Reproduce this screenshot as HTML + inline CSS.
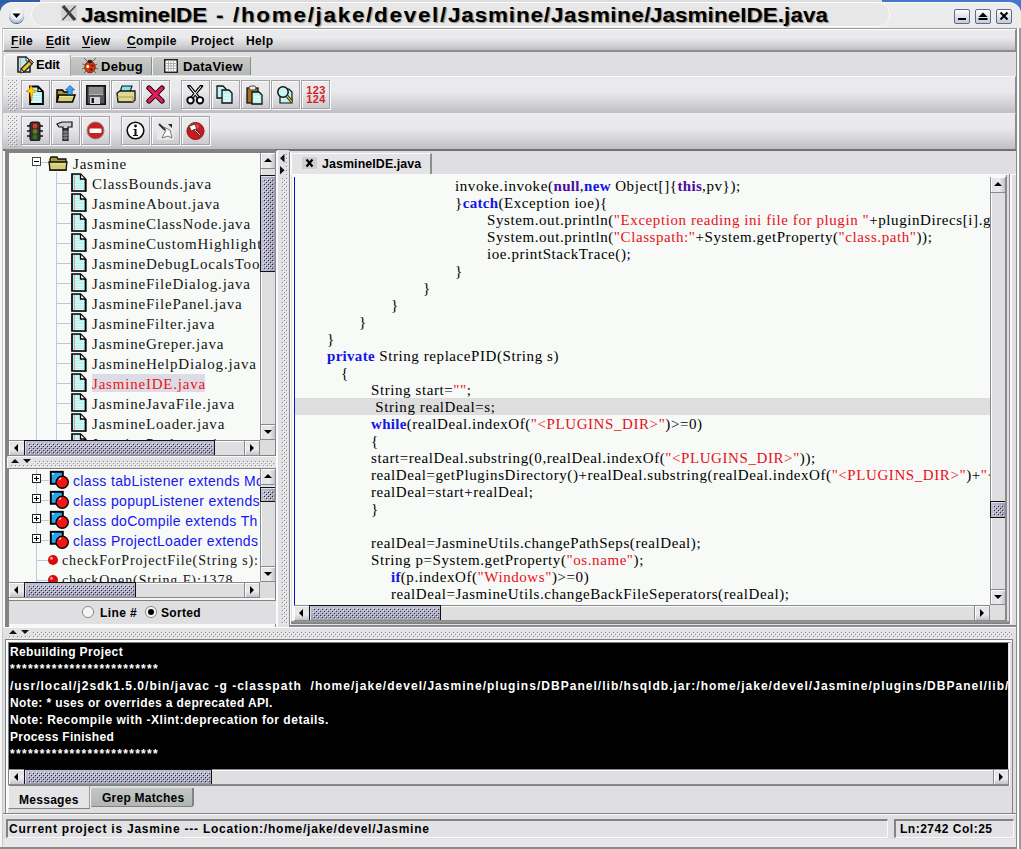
<!DOCTYPE html>
<html><head><meta charset="utf-8"><style>
*{margin:0;padding:0;box-sizing:border-box}
html,body{width:1021px;height:849px;overflow:hidden;background:#dddcdf;font-family:"Liberation Sans",sans-serif}
.a{position:absolute}
.t{white-space:pre}
.grad{background:linear-gradient(#ebeaed,#e9e8eb 40%,#d6d5d9 70%,#bfbec2)}
.btn{position:absolute;width:29px;height:29px;border:1px solid #a4a4a8;box-shadow:inset 1px 1px 0 #fbfbfb,1px 1px 0 #fbfbfb}
.grip{position:absolute;background-image:radial-gradient(circle at 1px 1px,#8e8e92 0.9px,transparent 1.1px),radial-gradient(circle at 3px 3px,#8e8e92 0.9px,transparent 1.1px);background-size:4px 4px}
.code{position:absolute;font-family:"Liberation Serif",serif;font-size:15px;letter-spacing:0.58px;white-space:pre;color:#000;line-height:17px}
.k{color:#1414e6;font-weight:bold;letter-spacing:0.3px}
.kp{color:#4a0ca0;font-weight:bold;letter-spacing:0.3px}
.s{color:#e8101a}
.tree{position:absolute;font-family:"Liberation Serif",serif;font-size:15px;letter-spacing:0.8px;white-space:pre;color:#141414;line-height:20px}
.thumbv{background:linear-gradient(90deg,#9896ac,#cac8da 45%,#aeacc0);border-left:1px solid #333;border-top:1px solid #444}
.thumbh{background:linear-gradient(#9896ac,#cac8da 45%,#aeacc0);border-top:1px solid #333;border-left:1px solid #444}
.dots{background-image:radial-gradient(circle,#4c4b60 0.75px,transparent 1.05px);background-size:3px 3px}
.sbtn{background:linear-gradient(90deg,#e6e6e6,#f4f4f4 50%,#cfcfcf);}
.sbtnh{background:linear-gradient(#e6e6e6,#f4f4f4 50%,#cfcfcf);}
.track{background:#dcdcdc}
</style></head><body>
<svg width="0" height="0" style="position:absolute;left:0;top:0"><defs><pattern id="bump" width="4" height="4" patternUnits="userSpaceOnUse"><rect x="0" y="0" width="1" height="1" fill="#8a8a8e"/><rect x="1" y="1" width="1" height="1" fill="#fdfdfd"/><rect x="2" y="2" width="1" height="1" fill="#8a8a8e"/><rect x="3" y="3" width="1" height="1" fill="#fdfdfd"/></pattern><pattern id="tdot" width="4" height="4" patternUnits="userSpaceOnUse"><rect x="0" y="1" width="1" height="1" fill="#2a2a36"/><rect x="3" y="0" width="1" height="1" fill="#e4e4f6"/><rect x="2" y="3" width="1" height="1" fill="#2a2a36"/><rect x="1" y="2" width="1" height="1" fill="#e4e4f6"/></pattern><pattern id="tdoth" width="4" height="4" patternUnits="userSpaceOnUse"><rect x="1" y="0" width="1" height="1" fill="#2a2a36"/><rect x="0" y="3" width="1" height="1" fill="#e4e4f6"/><rect x="3" y="2" width="1" height="1" fill="#2a2a36"/><rect x="2" y="1" width="1" height="1" fill="#e4e4f6"/></pattern><linearGradient id="thv" x1="0" x2="1" y1="0" y2="0"><stop offset="0" stop-color="#c0bed2"/><stop offset="0.45" stop-color="#b4b2c6"/><stop offset="1" stop-color="#9896aa"/></linearGradient><linearGradient id="thh" x1="0" x2="0" y1="0" y2="1"><stop offset="0" stop-color="#c0bed2"/><stop offset="0.45" stop-color="#b4b2c6"/><stop offset="1" stop-color="#9896aa"/></linearGradient><linearGradient id="btv" x1="0" x2="1" y1="0" y2="0"><stop offset="0" stop-color="#e2e2e4"/><stop offset="0.55" stop-color="#ecebee"/><stop offset="1" stop-color="#c4c3c8"/></linearGradient><linearGradient id="bth" x1="0" x2="0" y1="0" y2="1"><stop offset="0" stop-color="#e2e2e4"/><stop offset="0.55" stop-color="#ecebee"/><stop offset="1" stop-color="#c4c3c8"/></linearGradient></defs></svg>
<div class="a" style="left:0px;top:0px;width:1021px;height:849px;background:#dddcdf"></div>
<div class="a" style="left:0px;top:0px;width:40px;height:4px;background:#2f5ea8"></div>
<div class="a" style="left:0px;top:0px;width:9px;height:11px;background:#2f5ea8"></div>
<div class="a" style="left:882px;top:0px;width:139px;height:4px;background:#4278cc"></div>
<div class="a" style="left:1008px;top:0px;width:13px;height:12px;background:#4278cc"></div>
<div class="a" style="left:0px;top:2px;width:1021px;height:28px;background:#ececec;border-radius:12px 12px 0 0;border-top:1px solid #fbfbfb"></div>
<div class="a" style="left:31px;top:2px;width:859px;height:25px;background:#e7e7e7;border-radius:12px;border:1.5px solid #fcfcfc"></div>
<div class="a" style="left:9px;top:8px;width:15px;height:15px;border-radius:50%;background:radial-gradient(circle at 50% 35%,#ffffff 0,#eef0f4 45%,#b8c4d8 70%,#4a6ea8 100%);box-shadow:0 1px 0 #3a5a98"></div>
<svg class="a" style="left:9px;top:8px" width="15" height="15" viewBox="0 0 15 15"><path d="M3.5 5.5 L11.5 5.5 L7.5 10 Z" fill="#000"/></svg>
<div class="a" style="left:61px;top:5px;width:16px;height:16px;background:#d4d4d4"></div>
<svg class="a" style="left:61px;top:5px" width="16" height="16" viewBox="0 0 16 16"><path d="M2 1 L14 15" stroke="#3a3a3a" stroke-width="3.2"/><path d="M14.5 1 L1.5 15" stroke="#444" stroke-width="1.3"/></svg>
<div class="a t " style="left:81px;top:4px;font-size:20px;font-weight:bold;color:#000;transform-origin:0 0;text-shadow:1px 1px 1px #8a8a8a;letter-spacing:-0.089px;transform:scaleX(1.12)">JasmineIDE</div>
<div class="a t " style="left:216px;top:4px;font-size:20px;font-weight:bold;color:#000;transform-origin:0 0;text-shadow:1px 1px 1px #8a8a8a;letter-spacing:1.366px;transform:scaleX(1.12)">-</div>
<div class="a t " style="left:233px;top:4px;font-size:20px;font-weight:bold;color:#000;transform-origin:0 0;text-shadow:1px 1px 1px #8a8a8a;letter-spacing:1.548px;transform:scaleX(1.12)">/home/jake/devel/</div>
<div class="a t " style="left:448px;top:4px;font-size:20px;font-weight:bold;color:#000;transform-origin:0 0;text-shadow:1px 1px 1px #8a8a8a;letter-spacing:0.793px;transform:scaleX(1.12)">Jasmine/</div>
<div class="a t " style="left:551px;top:4px;font-size:20px;font-weight:bold;color:#000;transform-origin:0 0;text-shadow:1px 1px 1px #8a8a8a;letter-spacing:0.458px;transform:scaleX(1.12)">Jasmine/</div>
<div class="a t " style="left:650px;top:4px;font-size:20px;font-weight:bold;color:#000;transform-origin:0 0;text-shadow:1px 1px 1px #8a8a8a;letter-spacing:0.07px;transform:scaleX(1.12)">JasmineIDE.java</div>
<div class="a" style="left:954px;top:9px;width:16px;height:15px;border:1px solid #5f6b88;background:linear-gradient(#ffffff,#c5cad8);border-radius:2px"></div>
<div class="a" style="left:975px;top:9px;width:16px;height:15px;border:1px solid #5f6b88;background:linear-gradient(#ffffff,#c5cad8);border-radius:2px"></div>
<div class="a" style="left:996px;top:9px;width:16px;height:15px;border:1px solid #5f6b88;background:linear-gradient(#ffffff,#c5cad8);border-radius:2px"></div>
<svg class="a" style="left:954px;top:9px" width="16" height="15" viewBox="0 0 16 15"><rect x="4" y="9" width="8" height="2" fill="#000"/></svg>
<svg class="a" style="left:975px;top:9px" width="16" height="15" viewBox="0 0 16 15"><path d="M3.5 8 L8 3.5 L12.5 8 Z" fill="#000"/><rect x="3.5" y="9" width="9" height="2" fill="#000"/></svg>
<svg class="a" style="left:996px;top:9px" width="16" height="15" viewBox="0 0 16 15"><path d="M4.5 3.5 L11.5 10.5 M11.5 3.5 L4.5 10.5" stroke="#000" stroke-width="2"/></svg>
<div class="a" style="left:0px;top:28px;width:5px;height:821px;background:#fbfbfb;border-left:2px solid #f4f7f4"></div>
<div class="a" style="left:2px;top:28px;width:1px;height:821px;background:#c8c8c8"></div>
<div class="a" style="left:3px;top:28px;width:1013px;height:1px;background:#9a9a9a"></div>
<div class="a grad" style="left:3px;top:29px;width:1014px;height:23px;border-top:1px solid #fff;border-left:1px solid #fff;border-bottom:2px solid #8d8d91;border-right:2px solid #8d8d91"></div>
<div class="a t " style="left:11px;top:34px;font-size:12px;font-weight:bold;color:#000;letter-spacing:0.35px;line-height:15px;text-underline-offset:2px"><u>F</u>ile</div>
<div class="a t " style="left:46px;top:34px;font-size:12px;font-weight:bold;color:#000;letter-spacing:0.35px;line-height:15px;text-underline-offset:2px"><u>E</u>dit</div>
<div class="a t " style="left:82px;top:34px;font-size:12px;font-weight:bold;color:#000;letter-spacing:0.35px;line-height:15px;text-underline-offset:2px"><u>V</u>iew</div>
<div class="a t " style="left:127px;top:34px;font-size:12px;font-weight:bold;color:#000;letter-spacing:0.35px;line-height:15px;text-underline-offset:2px"><u>C</u>ompile</div>
<div class="a t " style="left:191px;top:34px;font-size:12px;font-weight:bold;color:#000;letter-spacing:0.35px;line-height:15px;text-underline-offset:2px">Project</div>
<div class="a t " style="left:246px;top:34px;font-size:12px;font-weight:bold;color:#000;letter-spacing:0.35px;line-height:15px;text-underline-offset:2px">Help</div>
<div class="a" style="left:3px;top:52px;width:1013px;height:25px;background:#dfdee1"></div>
<div class="a" style="left:70px;top:56px;width:82px;height:19px;background:linear-gradient(#c8cac8,#b4b8b4);border-left:1px solid #f2f2f2;border-top:1px solid #f2f2f2;border-right:1px solid #8a8a8a;border-radius:3px 3px 0 0"></div>
<div class="a" style="left:152px;top:56px;width:99px;height:19px;background:linear-gradient(#c8cac8,#b4b8b4);border-left:1px solid #f2f2f2;border-top:1px solid #f2f2f2;border-right:1px solid #8a8a8a;border-radius:3px 3px 0 0"></div>
<div class="a" style="left:4px;top:54px;width:67px;height:23px;background:linear-gradient(#efeff0,#dfdee1);border-left:1px solid #fff;border-top:1px solid #fff;border-right:1px solid #a8a8a8;border-radius:4px 4px 0 0"></div>
<div class="a t " style="left:36px;top:57px;font-size:13px;font-weight:bold;color:#000;letter-spacing:-0.2px">Edit</div>
<div class="a t " style="left:101px;top:59px;font-size:13px;font-weight:bold;color:#000;letter-spacing:0.3px">Debug</div>
<div class="a t " style="left:183px;top:59px;font-size:13px;font-weight:bold;color:#000;letter-spacing:0.3px">DataView</div>
<svg class="a" style="left:16px;top:55px" width="18" height="19" viewBox="0 0 18 19"><path d="M2 2 H10 L14 6 V17 H2 Z" fill="#b4eeee" stroke="#222" stroke-width="1.6"/><path d="M4.5 3 V16" stroke="#f0a0a0" stroke-width="1.2"/><path d="M10 2 L14 6 H10 Z" fill="#fff" stroke="#222" stroke-width="0.9"/><path d="M5 14 L13 6 L16 9 L8 17 Z" fill="#f2cc2a" stroke="#222" stroke-width="1.3"/><path d="M13 6 L14.5 4.5 L17.5 7.5 L16 9 Z" fill="#e86a6a" stroke="#222" stroke-width="0.9"/><path d="M5 14 L8 17 L4 18 Z" fill="#d4b080" stroke="#222" stroke-width="0.8"/></svg>
<svg class="a" style="left:81px;top:56px" width="18" height="18" viewBox="0 0 18 18"><path d="M3 2 L6 5 M15 2 L12 5 M1.5 8 L4 9 M16.5 8 L14 9 M1 13 L4 12 M17 13 L14 12 M3 17 L5 15 M15 17 L13 15" stroke="#6a5a3a" stroke-width="0.9"/><ellipse cx="9" cy="11" rx="5.2" ry="5.8" fill="#e23a0c" stroke="#5a1a0a" stroke-width="0.8"/><ellipse cx="9" cy="5.5" rx="2.6" ry="1.8" fill="#222"/><circle cx="6.8" cy="10.5" r="1.5" fill="#fff"/><circle cx="11.5" cy="9.5" r="1" fill="#3a0a00"/><circle cx="10.5" cy="13.5" r="1.1" fill="#3a0a00"/><path d="M9 7 V16.5" stroke="#8a1a00" stroke-width="0.6"/></svg>
<svg class="a" style="left:164px;top:59px" width="14" height="14" viewBox="0 0 14 14"><rect x="0.75" y="0.75" width="12.5" height="12.5" fill="#fff" stroke="#222" stroke-width="1.5"/><path d="M4.5 1 V13 M7 1 V13 M9.5 1 V13 M1 4.5 H13 M1 7 H13 M1 9.5 H13" stroke="#aaa" stroke-width="0.9"/></svg>
<div class="a grad" style="left:3px;top:76px;width:1013px;height:37px;border-top:1px solid #fafafc;border-right:1px solid #8d8d91"></div>
<div class="a grad" style="left:3px;top:113px;width:1013px;height:36px;border-top:1px solid #f0f0f2;border-right:1px solid #8d8d91"></div>
<div class="a" style="left:3px;top:149px;width:1013px;height:2px;background:#727274"></div>
<svg class="a" style="left:8px;top:80px" width="9" height="31" viewBox="0 0 9 31"><rect width="9" height="31" fill="url(#bump)"/></svg>
<svg class="a" style="left:8px;top:116px" width="9" height="31" viewBox="0 0 9 31"><rect width="9" height="31" fill="url(#bump)"/></svg>
<div class="btn" style="left:21px;top:80px"></div>
<div class="btn" style="left:51px;top:80px"></div>
<div class="btn" style="left:81px;top:80px"></div>
<div class="btn" style="left:111px;top:80px"></div>
<div class="btn" style="left:141px;top:80px"></div>
<div class="btn" style="left:181px;top:80px"></div>
<div class="btn" style="left:211px;top:80px"></div>
<div class="btn" style="left:241px;top:80px"></div>
<div class="btn" style="left:271px;top:80px"></div>
<div class="btn" style="left:301px;top:80px"></div>
<div class="btn" style="left:21px;top:116px"></div>
<div class="btn" style="left:51px;top:116px"></div>
<div class="btn" style="left:81px;top:116px"></div>
<div class="btn" style="left:121px;top:116px"></div>
<div class="btn" style="left:151px;top:116px"></div>
<div class="btn" style="left:181px;top:116px"></div>
<svg class="a" style="left:26px;top:85px" width="20" height="20" viewBox="0 0 20 20"><path d="M4 1.5 H12 L17 6.5 V19 H4 Z" fill="#aef2f2" stroke="#000" stroke-width="1.8"/><path d="M6 9 H15 M6 11.5 H15 M6 14 H15 M6 16.5 H15" stroke="#f0ffff" stroke-width="1"/><path d="M12 2 V6.5 H16.5 Z" fill="#fff" stroke="#000" stroke-width="1.2"/><path d="M5 0 L6.6 4.6 L10.5 6.2 L6.6 7.8 L5.6 16 L4.4 7.8 L0 6.2 L3.4 4.6 Z" fill="#ffd800" stroke="#f08a00" stroke-width="0.9"/></svg>
<svg class="a" style="left:56px;top:85px" width="20" height="20" viewBox="0 0 20 20"><path d="M1 5 H6.5 L8 7 H14 V16 H1 Z" fill="#a89838" stroke="#000" stroke-width="1.5"/><path d="M0.8 17 L2.8 10 H19 L16.5 17 Z" fill="#d8cc70" stroke="#000" stroke-width="1.5"/><path d="M3 11.5 H17" stroke="#f0e8a8" stroke-width="1"/><path d="M14 0.5 L18.5 5 H16.2 V9.5 H11.8 V5 H9.5 Z" fill="#38a4f0" stroke="#10508a" stroke-width="0.7"/></svg>
<svg class="a" style="left:86px;top:85px" width="20" height="20" viewBox="0 0 20 20"><rect x="0.8" y="0.8" width="18.4" height="18.4" fill="#585858" stroke="#111" stroke-width="1.6"/><rect x="3" y="2" width="14" height="7" fill="#8e8e8e"/><rect x="3" y="9" width="14" height="1" fill="#b0b0b0"/><rect x="4" y="12" width="10" height="7" fill="#dadada"/><rect x="5.5" y="13" width="2.5" height="5" fill="#1a1a1a"/></svg>
<svg class="a" style="left:116px;top:85px" width="20" height="20" viewBox="0 0 20 20"><path d="M6 1 H16 L14 7 H4 Z" fill="#7fe6ec" stroke="#111" stroke-width="1.1"/><path d="M1 8 L4 6 H19 V15 L17 17 H2 Z" fill="#e0d890" stroke="#111" stroke-width="1.3"/><path d="M1 12 H17 V17" fill="none" stroke="#a89c40" stroke-width="1"/></svg>
<svg class="a" style="left:146px;top:85px" width="20" height="20" viewBox="0 0 20 20"><path d="M3 3 L16 16 M16 3 L3 16" stroke="#000" stroke-width="5.2" stroke-linecap="round"/><path d="M3 3 L16 16 M16 3 L3 16" stroke="#e41c5a" stroke-width="3.2" stroke-linecap="round"/></svg>
<svg class="a" style="left:186px;top:85px" width="20" height="20" viewBox="0 0 20 20"><path d="M3 1 L12.5 12.5 M15.5 1 L6 12.5" stroke="#000" stroke-width="3.4" stroke-linecap="round"/><path d="M3.5 1.5 L12 12 M15 1.5 L6.5 12" stroke="#fff" stroke-width="1.1"/><circle cx="4.5" cy="15.3" r="3.2" fill="#fff" stroke="#000" stroke-width="1.9"/><circle cx="14" cy="15.3" r="3.2" fill="#fff" stroke="#000" stroke-width="1.9"/></svg>
<svg class="a" style="left:216px;top:85px" width="20" height="20" viewBox="0 0 20 20"><path d="M1 1 H7 L10 4 V13 H1 Z" fill="#bff3f3" stroke="#111" stroke-width="1.3"/><path d="M6 5 H13 L16 8 V18 H6 Z" fill="#bff3f3" stroke="#111" stroke-width="1.3"/><path d="M8 10 H14 M8 13 H14 M8 16 H14" stroke="#fff" stroke-width="1"/></svg>
<svg class="a" style="left:246px;top:85px" width="20" height="20" viewBox="0 0 20 20"><rect x="1" y="3" width="11" height="15" fill="#a8701c" stroke="#111" stroke-width="1.3"/><rect x="3" y="1" width="7" height="4" rx="2" fill="#eee" stroke="#444"/><path d="M6 7 H13 L16 10 V19 H6 Z" fill="#bff3f3" stroke="#111" stroke-width="1.3"/><path d="M8 12 H14 M8 15 H14" stroke="#fff" stroke-width="1"/></svg>
<svg class="a" style="left:276px;top:85px" width="20" height="20" viewBox="0 0 20 20"><path d="M4 4 H13 L16 7 V18 H4 Z" fill="#bff3f3" stroke="#111" stroke-width="1.2"/><circle cx="7" cy="7" r="5.2" fill="#c8f6f6" stroke="#111" stroke-width="1.5"/><path d="M11 11 L16 17" stroke="#111" stroke-width="3"/><path d="M11 11 L16 17" stroke="#d8b020" stroke-width="1.6"/></svg>
<svg class="a" style="left:306px;top:85px" width="20" height="20" viewBox="0 0 20 20"><text x="10" y="9.2" font-family="Liberation Sans" font-weight="bold" font-size="11" letter-spacing="0.3" fill="#d41e1e" text-anchor="middle">123</text><text x="10" y="18.4" font-family="Liberation Sans" font-weight="bold" font-size="11" letter-spacing="0.3" fill="#d41e1e" text-anchor="middle">124</text></svg>
<svg class="a" style="left:26px;top:121px" width="20" height="20" viewBox="0 0 20 20"><rect x="4" y="1" width="10" height="19" rx="2" fill="#333" stroke="#111"/><path d="M1 5 H4 M1 10 H4 M1 15 H4 M14 5 H17 M14 10 H17 M14 15 H17" stroke="#111" stroke-width="1.5"/><circle cx="9" cy="5" r="2.4" fill="#e83030"/><circle cx="9" cy="10.5" r="2.4" fill="#7a7020"/><circle cx="9" cy="16" r="2.4" fill="#207a20"/></svg>
<svg class="a" style="left:56px;top:121px" width="20" height="20" viewBox="0 0 20 20"><path d="M1 3 L6 1 H16 V6 H12 V8 H7 V6 H3 Z" fill="#d0d0d0" stroke="#111" stroke-width="1.2"/><rect x="7" y="8" width="5" height="12" fill="#555" stroke="#111" stroke-width="1.1"/><path d="M7 11 H12 M7 14 H12 M7 17 H12" stroke="#bbb" stroke-width="0.8"/></svg>
<svg class="a" style="left:86px;top:121px" width="20" height="20" viewBox="0 0 20 20"><circle cx="9.5" cy="9.5" r="8.5" fill="#c82020" stroke="#888" stroke-width="1"/><rect x="3.5" y="7.5" width="12" height="4.5" rx="1" fill="#fff"/></svg>
<svg class="a" style="left:126px;top:121px" width="20" height="20" viewBox="0 0 20 20"><circle cx="9.5" cy="9.5" r="8.3" fill="#fff" stroke="#111" stroke-width="1.6"/><circle cx="9.5" cy="5" r="1.4" fill="#111"/><path d="M7.5 8 H10.5 V14 H12 V15 H7 V14 H8.5 V9 H7.5 Z" fill="#111"/></svg>
<svg class="a" style="left:156px;top:121px" width="20" height="20" viewBox="0 0 20 20"><rect x="1" y="1" width="17" height="18" fill="#e8e8e8"/><path d="M3 4 L10 9 L6 17 L12 15 L16 17 L14 9 Z" fill="#fff" stroke="#777" stroke-width="1"/><path d="M3 3 L9 9" stroke="#333" stroke-width="2"/><path d="M12 3 L16 3 L16 7 Z" fill="#222"/></svg>
<svg class="a" style="left:186px;top:121px" width="20" height="20" viewBox="0 0 20 20"><circle cx="9.5" cy="10" r="8.6" fill="#d01818" stroke="#611" stroke-width="0.8"/><ellipse cx="8" cy="5.5" rx="5" ry="2.5" fill="#f07070" opacity="0.6"/><rect x="4" y="4" width="6" height="5" fill="#fff" stroke="#333" stroke-width="0.8" transform="rotate(-20 7 6.5)"/><path d="M9 9 L14 14" stroke="#333" stroke-width="2.4"/><path d="M9 9 L14 14" stroke="#ddd" stroke-width="1"/></svg>
<div class="a" style="left:5px;top:149px;width:271px;height:479px;background:#828282"></div>
<div class="a" style="left:9px;top:153px;width:251px;height:287px;background:#f7faf7"></div>
<div class="a" style="left:36px;top:166px;width:1px;height:274px;background:#c4c4e4"></div>
<div class="a" style="left:56px;top:172px;width:1px;height:268px;background:#c4c4e4"></div>
<div class="a" style="left:32px;top:157px;width:9px;height:9px;background:#fff;border:1px solid #444"></div>
<div class="a" style="left:34px;top:161px;width:5px;height:1px;background:#000"></div>
<div class="a" style="left:41px;top:162px;width:8px;height:1px;background:#c4c4e4"></div>
<svg class="a" style="left:48px;top:155px" width="21" height="17" viewBox="0 0 21 17"><path d="M2 4 L3 2 H9 L10 4 H18 V15 H2 Z" fill="#a89a3a" stroke="#111" stroke-width="1.3"/><path d="M2 15 L1 7 H19 L18 15 Z" fill="#d8cc72" stroke="#111" stroke-width="1.3"/><path d="M3 9 H17" stroke="#efe6a0" stroke-width="1"/></svg>
<div class="a t tree" style="left:73px;top:154px;color:#141414">Jasmine</div>
<div class="a" style="left:57px;top:183px;width:14px;height:1px;background:#c4c4e4"></div>
<svg class="a" style="left:71px;top:173px" width="16" height="19" viewBox="0 0 16 19"><path d="M15.5 6 V19 H2.5" stroke="#8a8a8a" stroke-width="1.2" fill="none"/><path d="M1 1 H9.5 L14.5 6 V18 H1 Z" fill="#aef2f2" stroke="#000" stroke-width="1.7"/><path d="M3 4 H9 M3 6.5 H13 M3 9 H13 M3 11.5 H13 M3 14 H13 M3 16.5 H13" stroke="#eefcfc" stroke-width="0.9"/><path d="M3.5 2 V17" stroke="#f4a0a0" stroke-width="1"/><path d="M9.5 1.5 V6 H14" fill="#fff" stroke="#000" stroke-width="1.3"/></svg>
<div class="a t tree" style="left:92px;top:174px;color:#141414">ClassBounds.java</div>
<div class="a" style="left:57px;top:203px;width:14px;height:1px;background:#c4c4e4"></div>
<svg class="a" style="left:71px;top:193px" width="16" height="19" viewBox="0 0 16 19"><path d="M15.5 6 V19 H2.5" stroke="#8a8a8a" stroke-width="1.2" fill="none"/><path d="M1 1 H9.5 L14.5 6 V18 H1 Z" fill="#aef2f2" stroke="#000" stroke-width="1.7"/><path d="M3 4 H9 M3 6.5 H13 M3 9 H13 M3 11.5 H13 M3 14 H13 M3 16.5 H13" stroke="#eefcfc" stroke-width="0.9"/><path d="M3.5 2 V17" stroke="#f4a0a0" stroke-width="1"/><path d="M9.5 1.5 V6 H14" fill="#fff" stroke="#000" stroke-width="1.3"/></svg>
<div class="a t tree" style="left:92px;top:194px;color:#141414">JasmineAbout.java</div>
<div class="a" style="left:57px;top:223px;width:14px;height:1px;background:#c4c4e4"></div>
<svg class="a" style="left:71px;top:213px" width="16" height="19" viewBox="0 0 16 19"><path d="M15.5 6 V19 H2.5" stroke="#8a8a8a" stroke-width="1.2" fill="none"/><path d="M1 1 H9.5 L14.5 6 V18 H1 Z" fill="#aef2f2" stroke="#000" stroke-width="1.7"/><path d="M3 4 H9 M3 6.5 H13 M3 9 H13 M3 11.5 H13 M3 14 H13 M3 16.5 H13" stroke="#eefcfc" stroke-width="0.9"/><path d="M3.5 2 V17" stroke="#f4a0a0" stroke-width="1"/><path d="M9.5 1.5 V6 H14" fill="#fff" stroke="#000" stroke-width="1.3"/></svg>
<div class="a t tree" style="left:92px;top:214px;color:#141414">JasmineClassNode.java</div>
<div class="a" style="left:57px;top:243px;width:14px;height:1px;background:#c4c4e4"></div>
<svg class="a" style="left:71px;top:233px" width="16" height="19" viewBox="0 0 16 19"><path d="M15.5 6 V19 H2.5" stroke="#8a8a8a" stroke-width="1.2" fill="none"/><path d="M1 1 H9.5 L14.5 6 V18 H1 Z" fill="#aef2f2" stroke="#000" stroke-width="1.7"/><path d="M3 4 H9 M3 6.5 H13 M3 9 H13 M3 11.5 H13 M3 14 H13 M3 16.5 H13" stroke="#eefcfc" stroke-width="0.9"/><path d="M3.5 2 V17" stroke="#f4a0a0" stroke-width="1"/><path d="M9.5 1.5 V6 H14" fill="#fff" stroke="#000" stroke-width="1.3"/></svg>
<div class="a t tree" style="left:92px;top:234px;color:#141414">JasmineCustomHighlight</div>
<div class="a" style="left:57px;top:263px;width:14px;height:1px;background:#c4c4e4"></div>
<svg class="a" style="left:71px;top:253px" width="16" height="19" viewBox="0 0 16 19"><path d="M15.5 6 V19 H2.5" stroke="#8a8a8a" stroke-width="1.2" fill="none"/><path d="M1 1 H9.5 L14.5 6 V18 H1 Z" fill="#aef2f2" stroke="#000" stroke-width="1.7"/><path d="M3 4 H9 M3 6.5 H13 M3 9 H13 M3 11.5 H13 M3 14 H13 M3 16.5 H13" stroke="#eefcfc" stroke-width="0.9"/><path d="M3.5 2 V17" stroke="#f4a0a0" stroke-width="1"/><path d="M9.5 1.5 V6 H14" fill="#fff" stroke="#000" stroke-width="1.3"/></svg>
<div class="a t tree" style="left:92px;top:254px;color:#141414">JasmineDebugLocalsTool</div>
<div class="a" style="left:57px;top:283px;width:14px;height:1px;background:#c4c4e4"></div>
<svg class="a" style="left:71px;top:273px" width="16" height="19" viewBox="0 0 16 19"><path d="M15.5 6 V19 H2.5" stroke="#8a8a8a" stroke-width="1.2" fill="none"/><path d="M1 1 H9.5 L14.5 6 V18 H1 Z" fill="#aef2f2" stroke="#000" stroke-width="1.7"/><path d="M3 4 H9 M3 6.5 H13 M3 9 H13 M3 11.5 H13 M3 14 H13 M3 16.5 H13" stroke="#eefcfc" stroke-width="0.9"/><path d="M3.5 2 V17" stroke="#f4a0a0" stroke-width="1"/><path d="M9.5 1.5 V6 H14" fill="#fff" stroke="#000" stroke-width="1.3"/></svg>
<div class="a t tree" style="left:92px;top:274px;color:#141414">JasmineFileDialog.java</div>
<div class="a" style="left:57px;top:303px;width:14px;height:1px;background:#c4c4e4"></div>
<svg class="a" style="left:71px;top:293px" width="16" height="19" viewBox="0 0 16 19"><path d="M15.5 6 V19 H2.5" stroke="#8a8a8a" stroke-width="1.2" fill="none"/><path d="M1 1 H9.5 L14.5 6 V18 H1 Z" fill="#aef2f2" stroke="#000" stroke-width="1.7"/><path d="M3 4 H9 M3 6.5 H13 M3 9 H13 M3 11.5 H13 M3 14 H13 M3 16.5 H13" stroke="#eefcfc" stroke-width="0.9"/><path d="M3.5 2 V17" stroke="#f4a0a0" stroke-width="1"/><path d="M9.5 1.5 V6 H14" fill="#fff" stroke="#000" stroke-width="1.3"/></svg>
<div class="a t tree" style="left:92px;top:294px;color:#141414">JasmineFilePanel.java</div>
<div class="a" style="left:57px;top:323px;width:14px;height:1px;background:#c4c4e4"></div>
<svg class="a" style="left:71px;top:313px" width="16" height="19" viewBox="0 0 16 19"><path d="M15.5 6 V19 H2.5" stroke="#8a8a8a" stroke-width="1.2" fill="none"/><path d="M1 1 H9.5 L14.5 6 V18 H1 Z" fill="#aef2f2" stroke="#000" stroke-width="1.7"/><path d="M3 4 H9 M3 6.5 H13 M3 9 H13 M3 11.5 H13 M3 14 H13 M3 16.5 H13" stroke="#eefcfc" stroke-width="0.9"/><path d="M3.5 2 V17" stroke="#f4a0a0" stroke-width="1"/><path d="M9.5 1.5 V6 H14" fill="#fff" stroke="#000" stroke-width="1.3"/></svg>
<div class="a t tree" style="left:92px;top:314px;color:#141414">JasmineFilter.java</div>
<div class="a" style="left:57px;top:343px;width:14px;height:1px;background:#c4c4e4"></div>
<svg class="a" style="left:71px;top:333px" width="16" height="19" viewBox="0 0 16 19"><path d="M15.5 6 V19 H2.5" stroke="#8a8a8a" stroke-width="1.2" fill="none"/><path d="M1 1 H9.5 L14.5 6 V18 H1 Z" fill="#aef2f2" stroke="#000" stroke-width="1.7"/><path d="M3 4 H9 M3 6.5 H13 M3 9 H13 M3 11.5 H13 M3 14 H13 M3 16.5 H13" stroke="#eefcfc" stroke-width="0.9"/><path d="M3.5 2 V17" stroke="#f4a0a0" stroke-width="1"/><path d="M9.5 1.5 V6 H14" fill="#fff" stroke="#000" stroke-width="1.3"/></svg>
<div class="a t tree" style="left:92px;top:334px;color:#141414">JasmineGreper.java</div>
<div class="a" style="left:57px;top:363px;width:14px;height:1px;background:#c4c4e4"></div>
<svg class="a" style="left:71px;top:353px" width="16" height="19" viewBox="0 0 16 19"><path d="M15.5 6 V19 H2.5" stroke="#8a8a8a" stroke-width="1.2" fill="none"/><path d="M1 1 H9.5 L14.5 6 V18 H1 Z" fill="#aef2f2" stroke="#000" stroke-width="1.7"/><path d="M3 4 H9 M3 6.5 H13 M3 9 H13 M3 11.5 H13 M3 14 H13 M3 16.5 H13" stroke="#eefcfc" stroke-width="0.9"/><path d="M3.5 2 V17" stroke="#f4a0a0" stroke-width="1"/><path d="M9.5 1.5 V6 H14" fill="#fff" stroke="#000" stroke-width="1.3"/></svg>
<div class="a t tree" style="left:92px;top:354px;color:#141414">JasmineHelpDialog.java</div>
<div class="a" style="left:57px;top:383px;width:14px;height:1px;background:#c4c4e4"></div>
<svg class="a" style="left:71px;top:373px" width="16" height="19" viewBox="0 0 16 19"><path d="M15.5 6 V19 H2.5" stroke="#8a8a8a" stroke-width="1.2" fill="none"/><path d="M1 1 H9.5 L14.5 6 V18 H1 Z" fill="#aef2f2" stroke="#000" stroke-width="1.7"/><path d="M3 4 H9 M3 6.5 H13 M3 9 H13 M3 11.5 H13 M3 14 H13 M3 16.5 H13" stroke="#eefcfc" stroke-width="0.9"/><path d="M3.5 2 V17" stroke="#f4a0a0" stroke-width="1"/><path d="M9.5 1.5 V6 H14" fill="#fff" stroke="#000" stroke-width="1.3"/></svg>
<div class="a" style="left:92px;top:374px;width:113px;height:18px;background:#dcdce6"></div>
<div class="a t tree" style="left:92px;top:374px;color:#f01414">JasmineIDE.java</div>
<div class="a" style="left:57px;top:403px;width:14px;height:1px;background:#c4c4e4"></div>
<svg class="a" style="left:71px;top:393px" width="16" height="19" viewBox="0 0 16 19"><path d="M15.5 6 V19 H2.5" stroke="#8a8a8a" stroke-width="1.2" fill="none"/><path d="M1 1 H9.5 L14.5 6 V18 H1 Z" fill="#aef2f2" stroke="#000" stroke-width="1.7"/><path d="M3 4 H9 M3 6.5 H13 M3 9 H13 M3 11.5 H13 M3 14 H13 M3 16.5 H13" stroke="#eefcfc" stroke-width="0.9"/><path d="M3.5 2 V17" stroke="#f4a0a0" stroke-width="1"/><path d="M9.5 1.5 V6 H14" fill="#fff" stroke="#000" stroke-width="1.3"/></svg>
<div class="a t tree" style="left:92px;top:394px;color:#141414">JasmineJavaFile.java</div>
<div class="a" style="left:57px;top:423px;width:14px;height:1px;background:#c4c4e4"></div>
<svg class="a" style="left:71px;top:413px" width="16" height="19" viewBox="0 0 16 19"><path d="M15.5 6 V19 H2.5" stroke="#8a8a8a" stroke-width="1.2" fill="none"/><path d="M1 1 H9.5 L14.5 6 V18 H1 Z" fill="#aef2f2" stroke="#000" stroke-width="1.7"/><path d="M3 4 H9 M3 6.5 H13 M3 9 H13 M3 11.5 H13 M3 14 H13 M3 16.5 H13" stroke="#eefcfc" stroke-width="0.9"/><path d="M3.5 2 V17" stroke="#f4a0a0" stroke-width="1"/><path d="M9.5 1.5 V6 H14" fill="#fff" stroke="#000" stroke-width="1.3"/></svg>
<div class="a t tree" style="left:92px;top:414px;color:#141414">JasmineLoader.java</div>
<div class="a" style="left:57px;top:443px;width:14px;height:1px;background:#c4c4e4"></div>
<svg class="a" style="left:71px;top:433px" width="16" height="19" viewBox="0 0 16 19"><path d="M15.5 6 V19 H2.5" stroke="#8a8a8a" stroke-width="1.2" fill="none"/><path d="M1 1 H9.5 L14.5 6 V18 H1 Z" fill="#aef2f2" stroke="#000" stroke-width="1.7"/><path d="M3 4 H9 M3 6.5 H13 M3 9 H13 M3 11.5 H13 M3 14 H13 M3 16.5 H13" stroke="#eefcfc" stroke-width="0.9"/><path d="M3.5 2 V17" stroke="#f4a0a0" stroke-width="1"/><path d="M9.5 1.5 V6 H14" fill="#fff" stroke="#000" stroke-width="1.3"/></svg>
<div class="a t tree" style="left:92px;top:434px;color:#141414">JasminePackages.java</div>
<div class="a" style="left:9px;top:440px;width:251px;height:15px;background:#dadada"></div>
<svg class="a" style="left:260px;top:153px" width="16" height="287" viewBox="0 0 16 287"><rect width="16" height="287" fill="#dfdfe1"/><rect x="0" y="0" width="1" height="287" fill="#8a8a8e"/><rect x="15" y="0" width="1" height="287" fill="#8a8a8e"/><rect x="1" y="0" width="1" height="287" fill="#fbfbfb"/><rect x="2" y="1" width="13" height="15" fill="url(#btv)"/><rect x="1" y="0" width="14" height="1" fill="#fbfbfb"/><rect x="1" y="15" width="14" height="1" fill="#8a8a8e"/><path d="M4 9 L12 9 L8 5 Z" fill="#000"/><rect x="2" y="271" width="13" height="15" fill="url(#btv)"/><rect x="1" y="271" width="14" height="1" fill="#8a8a8e"/><rect x="2" y="272" width="13" height="1" fill="#fbfbfb"/><rect x="1" y="286" width="15" height="1" fill="#8a8a8e"/><path d="M4 277 L12 277 L8 281 Z" fill="#000"/></svg>
<svg class="a" style="left:260px;top:175px" width="16" height="97" viewBox="0 0 16 97"><rect x="0" y="0" width="16" height="97" fill="url(#thv)"/><rect x="3" y="4" width="11" height="91" fill="url(#tdot)"/><rect x="0" y="96" width="16" height="1" fill="#111"/><rect x="1" y="1" width="14" height="1" fill="#dedcf0"/><rect x="0" y="0" width="1" height="97" fill="#111"/><rect x="0" y="0" width="16" height="1" fill="#111"/><rect x="15" y="0" width="1" height="97" fill="#8a8a8e"/></svg>
<svg class="a" style="left:9px;top:440px" width="251" height="16" viewBox="0 0 251 16"><rect width="251" height="16" fill="#dfdfe1"/><rect x="0" y="0" width="251" height="1" fill="#8a8a8e"/><rect x="0" y="15" width="251" height="1" fill="#8a8a8e"/><rect x="0" y="1" width="251" height="1" fill="#fbfbfb"/><rect x="1" y="2" width="15" height="13" fill="url(#bth)"/><rect x="0" y="1" width="1" height="14" fill="#fbfbfb"/><rect x="15" y="1" width="1" height="14" fill="#8a8a8e"/><path d="M9 4 L9 12 L5 8 Z" fill="#000"/><rect x="236" y="2" width="14" height="13" fill="url(#bth)"/><rect x="235" y="1" width="1" height="14" fill="#8a8a8e"/><rect x="236" y="2" width="1" height="13" fill="#fbfbfb"/><rect x="250" y="1" width="1" height="15" fill="#8a8a8e"/><path d="M241 4 L241 12 L245 8 Z" fill="#000"/></svg>
<svg class="a" style="left:24px;top:440px" width="191" height="16" viewBox="0 0 191 16"><rect x="0" y="0" width="191" height="16" fill="url(#thh)"/><rect x="4" y="3" width="185" height="11" fill="url(#tdoth)"/><rect x="190" y="0" width="1" height="16" fill="#111"/><rect x="1" y="1" width="1" height="14" fill="#dedcf0"/><rect x="0" y="0" width="1" height="16" fill="#111"/><rect x="0" y="0" width="191" height="1" fill="#111"/><rect x="0" y="15" width="191" height="1" fill="#8a8a8e"/></svg>
<div class="a" style="left:260px;top:440px;width:15px;height:15px;background:#dcdcdc"></div>
<div class="a" style="left:7px;top:456px;width:269px;height:12px;background:#e2e2e4;border-top:1px solid #fbfbfb;border-left:1px solid #fbfbfb;border-top-left-radius:2px"></div>
<svg class="a" style="left:35px;top:461px" width="239" height="6" viewBox="0 0 239 6"><rect width="239" height="6" fill="url(#bump)"/></svg>
<svg class="a" style="left:11px;top:465px" width="24" height="2" viewBox="0 0 24 2"><rect width="24" height="2" fill="url(#bump)"/></svg>
<svg class="a" style="left:10px;top:457px" width="24" height="8" viewBox="0 0 24 8"><path d="M1 6 L9 6 L5 2 Z M13 2 L21 2 L17 6 Z" fill="#111"/></svg>
<div class="a" style="left:5px;top:468px;width:271px;height:1px;background:#828282"></div>
<div class="a" style="left:9px;top:469px;width:251px;height:113px;background:#f7faf7"></div>
<div class="a" style="left:36px;top:469px;width:1px;height:113px;background:#c4c4e4"></div>
<div class="a" style="left:32px;top:474px;width:9px;height:9px;background:#fff;border:1px solid #222"></div>
<div class="a" style="left:34px;top:478px;width:5px;height:1px;background:#000"></div>
<div class="a" style="left:36px;top:476px;width:1px;height:5px;background:#000"></div>
<div class="a" style="left:41px;top:480px;width:8px;height:1px;background:#c4c4e4"></div>
<svg class="a" style="left:49px;top:470px" width="20" height="21" viewBox="0 0 20 21"><rect x="1.8" y="1.8" width="12" height="12" fill="#26a6f0" stroke="#000" stroke-width="1.9"/><circle cx="3.8" cy="3.8" r="0.9" fill="#fff"/><circle cx="13.2" cy="12.2" r="6.7" fill="#000"/><circle cx="13.2" cy="12.2" r="5.4" fill="#f01616"/><path d="M10.2 9.6 L12 8" stroke="#fff" stroke-width="1.1"/></svg>
<div class="a t " style="left:73px;top:471px;font-size:14px;letter-spacing:0.35px;color:#1616f2;line-height:20px">class tabListener extends Mo</div>
<div class="a" style="left:32px;top:494px;width:9px;height:9px;background:#fff;border:1px solid #222"></div>
<div class="a" style="left:34px;top:498px;width:5px;height:1px;background:#000"></div>
<div class="a" style="left:36px;top:496px;width:1px;height:5px;background:#000"></div>
<div class="a" style="left:41px;top:500px;width:8px;height:1px;background:#c4c4e4"></div>
<svg class="a" style="left:49px;top:490px" width="20" height="21" viewBox="0 0 20 21"><rect x="1.8" y="1.8" width="12" height="12" fill="#26a6f0" stroke="#000" stroke-width="1.9"/><circle cx="3.8" cy="3.8" r="0.9" fill="#fff"/><circle cx="13.2" cy="12.2" r="6.7" fill="#000"/><circle cx="13.2" cy="12.2" r="5.4" fill="#f01616"/><path d="M10.2 9.6 L12 8" stroke="#fff" stroke-width="1.1"/></svg>
<div class="a t " style="left:73px;top:491px;font-size:14px;letter-spacing:0.35px;color:#1616f2;line-height:20px">class popupListener extends</div>
<div class="a" style="left:32px;top:514px;width:9px;height:9px;background:#fff;border:1px solid #222"></div>
<div class="a" style="left:34px;top:518px;width:5px;height:1px;background:#000"></div>
<div class="a" style="left:36px;top:516px;width:1px;height:5px;background:#000"></div>
<div class="a" style="left:41px;top:520px;width:8px;height:1px;background:#c4c4e4"></div>
<svg class="a" style="left:49px;top:510px" width="20" height="21" viewBox="0 0 20 21"><rect x="1.8" y="1.8" width="12" height="12" fill="#26a6f0" stroke="#000" stroke-width="1.9"/><circle cx="3.8" cy="3.8" r="0.9" fill="#fff"/><circle cx="13.2" cy="12.2" r="6.7" fill="#000"/><circle cx="13.2" cy="12.2" r="5.4" fill="#f01616"/><path d="M10.2 9.6 L12 8" stroke="#fff" stroke-width="1.1"/></svg>
<div class="a t " style="left:73px;top:511px;font-size:14px;letter-spacing:0.35px;color:#1616f2;line-height:20px">class doCompile extends Th</div>
<div class="a" style="left:32px;top:534px;width:9px;height:9px;background:#fff;border:1px solid #222"></div>
<div class="a" style="left:34px;top:538px;width:5px;height:1px;background:#000"></div>
<div class="a" style="left:36px;top:536px;width:1px;height:5px;background:#000"></div>
<div class="a" style="left:41px;top:540px;width:8px;height:1px;background:#c4c4e4"></div>
<svg class="a" style="left:49px;top:530px" width="20" height="21" viewBox="0 0 20 21"><rect x="1.8" y="1.8" width="12" height="12" fill="#26a6f0" stroke="#000" stroke-width="1.9"/><circle cx="3.8" cy="3.8" r="0.9" fill="#fff"/><circle cx="13.2" cy="12.2" r="6.7" fill="#000"/><circle cx="13.2" cy="12.2" r="5.4" fill="#f01616"/><path d="M10.2 9.6 L12 8" stroke="#fff" stroke-width="1.1"/></svg>
<div class="a t " style="left:73px;top:531px;font-size:14px;letter-spacing:0.35px;color:#1616f2;line-height:20px">class ProjectLoader extends </div>
<div class="a" style="left:37px;top:560px;width:12px;height:1px;background:#c4c4e4"></div>
<svg class="a" style="left:47px;top:554px" width="12" height="12" viewBox="0 0 12 12"><circle cx="6" cy="6" r="5" fill="#d80c0c"/><circle cx="4.5" cy="4.2" r="1.5" fill="#ff9090"/></svg>
<div class="a t tree" style="left:62px;top:551px;color:#141414;font-size:14px;letter-spacing:0.9px">checkForProjectFile(String s):1</div>
<div class="a" style="left:37px;top:580px;width:12px;height:1px;background:#c4c4e4"></div>
<svg class="a" style="left:47px;top:574px" width="12" height="12" viewBox="0 0 12 12"><circle cx="6" cy="6" r="5" fill="#d80c0c"/><circle cx="4.5" cy="4.2" r="1.5" fill="#ff9090"/></svg>
<div class="a t tree" style="left:62px;top:571px;color:#141414;font-size:14px;letter-spacing:0.9px">checkOpen(String F):1378</div>
<div class="a" style="left:9px;top:582px;width:251px;height:16px;background:#dadada"></div>
<svg class="a" style="left:260px;top:469px" width="16" height="113" viewBox="0 0 16 113"><rect width="16" height="113" fill="#dfdfe1"/><rect x="0" y="0" width="1" height="113" fill="#8a8a8e"/><rect x="15" y="0" width="1" height="113" fill="#8a8a8e"/><rect x="1" y="0" width="1" height="113" fill="#fbfbfb"/><rect x="2" y="1" width="13" height="15" fill="url(#btv)"/><rect x="1" y="0" width="14" height="1" fill="#fbfbfb"/><rect x="1" y="15" width="14" height="1" fill="#8a8a8e"/><path d="M4 9 L12 9 L8 5 Z" fill="#000"/><rect x="2" y="97" width="13" height="15" fill="url(#btv)"/><rect x="1" y="97" width="14" height="1" fill="#8a8a8e"/><rect x="2" y="98" width="13" height="1" fill="#fbfbfb"/><rect x="1" y="112" width="15" height="1" fill="#8a8a8e"/><path d="M4 103 L12 103 L8 107 Z" fill="#000"/></svg>
<svg class="a" style="left:260px;top:487px" width="16" height="15" viewBox="0 0 16 15"><rect x="0" y="0" width="16" height="15" fill="url(#thv)"/><rect x="3" y="4" width="11" height="9" fill="url(#tdot)"/><rect x="0" y="14" width="16" height="1" fill="#111"/><rect x="1" y="1" width="14" height="1" fill="#dedcf0"/><rect x="0" y="0" width="1" height="15" fill="#111"/><rect x="0" y="0" width="16" height="1" fill="#111"/><rect x="15" y="0" width="1" height="15" fill="#8a8a8e"/></svg>
<svg class="a" style="left:9px;top:582px" width="251" height="16" viewBox="0 0 251 16"><rect width="251" height="16" fill="#dfdfe1"/><rect x="0" y="0" width="251" height="1" fill="#8a8a8e"/><rect x="0" y="15" width="251" height="1" fill="#8a8a8e"/><rect x="0" y="1" width="251" height="1" fill="#fbfbfb"/><rect x="1" y="2" width="15" height="13" fill="url(#bth)"/><rect x="0" y="1" width="1" height="14" fill="#fbfbfb"/><rect x="15" y="1" width="1" height="14" fill="#8a8a8e"/><path d="M9 4 L9 12 L5 8 Z" fill="#000"/><rect x="236" y="2" width="14" height="13" fill="url(#bth)"/><rect x="235" y="1" width="1" height="14" fill="#8a8a8e"/><rect x="236" y="2" width="1" height="13" fill="#fbfbfb"/><rect x="250" y="1" width="1" height="15" fill="#8a8a8e"/><path d="M241 4 L241 12 L245 8 Z" fill="#000"/></svg>
<svg class="a" style="left:24px;top:582px" width="112" height="16" viewBox="0 0 112 16"><rect x="0" y="0" width="112" height="16" fill="url(#thh)"/><rect x="4" y="3" width="106" height="11" fill="url(#tdoth)"/><rect x="111" y="0" width="1" height="16" fill="#111"/><rect x="1" y="1" width="1" height="14" fill="#dedcf0"/><rect x="0" y="0" width="1" height="16" fill="#111"/><rect x="0" y="0" width="112" height="1" fill="#111"/><rect x="0" y="15" width="112" height="1" fill="#8a8a8e"/></svg>
<div class="a" style="left:260px;top:582px;width:15px;height:16px;background:#dcdcdc"></div>
<div class="a" style="left:9px;top:598px;width:266px;height:30px;background:#f6f8f6"></div>
<div class="a" style="left:9px;top:600px;width:267px;height:24px;background:#dfdee1;border-top:1px solid #828282"></div>
<svg class="a" style="left:81px;top:605px" width="14" height="14" viewBox="0 0 14 14"><circle cx="7" cy="7" r="5.6" fill="#f4f4f4" stroke="#8a8a8a" stroke-width="1"/></svg>
<div class="a t " style="left:100px;top:606px;font-size:12px;font-weight:bold;color:#000;letter-spacing:0.4px;line-height:15px">Line #</div>
<svg class="a" style="left:144px;top:605px" width="14" height="14" viewBox="0 0 14 14"><circle cx="7" cy="7" r="5.6" fill="#f4f4f4" stroke="#8a8a8a" stroke-width="1"/><circle cx="7" cy="7" r="3" fill="#000"/></svg>
<div class="a t " style="left:161px;top:606px;font-size:12px;font-weight:bold;color:#000;letter-spacing:0.33px;line-height:15px">Sorted</div>
<div class="a" style="left:276px;top:150px;width:13px;height:477px;background:#e2e2e4;border-left:2px solid #fbfbfb;border-top-left-radius:3px"></div>
<svg class="a" style="left:282px;top:178px" width="6" height="446" viewBox="0 0 6 446"><rect width="6" height="446" fill="url(#bump)"/></svg>
<svg class="a" style="left:276px;top:152px" width="13" height="26" viewBox="0 0 13 26"><path d="M8.5 2 L8.5 10.5 L4 6.25 Z M4 14 L4 22.5 L8.5 18.25 Z" fill="#111"/><rect x="10" y="2" width="1" height="1" fill="#8a8a8e"/><rect x="11" y="3" width="1" height="1" fill="#fdfdfd"/><rect x="10" y="6" width="1" height="1" fill="#8a8a8e"/><rect x="11" y="7" width="1" height="1" fill="#fdfdfd"/><rect x="10" y="10" width="1" height="1" fill="#8a8a8e"/><rect x="11" y="11" width="1" height="1" fill="#fdfdfd"/><rect x="10" y="14" width="1" height="1" fill="#8a8a8e"/><rect x="11" y="15" width="1" height="1" fill="#fdfdfd"/><rect x="10" y="18" width="1" height="1" fill="#8a8a8e"/><rect x="11" y="19" width="1" height="1" fill="#fdfdfd"/><rect x="10" y="22" width="1" height="1" fill="#8a8a8e"/><rect x="11" y="23" width="1" height="1" fill="#fdfdfd"/></svg>
<div class="a" style="left:289px;top:152px;width:727px;height:473px;background:#dfdee1"></div>
<div class="a" style="left:289px;top:152px;width:1px;height:475px;background:#8a8a8e"></div>
<div class="a" style="left:290px;top:152px;width:1px;height:475px;background:#fbfbfb"></div>
<div class="a" style="left:291px;top:153px;width:141px;height:21px;background:#e4e4e6;border-top:1px solid #fafafa;border-left:1px solid #fafafa;border-right:2px solid #8e8e8e"></div>
<div class="a" style="left:302px;top:157px;width:15px;height:12px;background:#cfcfcf"></div>
<svg class="a" style="left:302px;top:157px" width="15" height="12" viewBox="0 0 15 12"><path d="M4.5 2.5 L10.5 9.5 M10.5 2.5 L4.5 9.5" stroke="#000" stroke-width="2.2"/></svg>
<div class="a t " style="left:322px;top:157px;font-size:12.4px;font-weight:bold;color:#000;line-height:15px;letter-spacing:0.1px">JasmineIDE.java</div>
<div class="a" style="left:291px;top:174px;width:725px;height:1px;background:#fbfbfb"></div>
<div class="a" style="left:292px;top:175px;width:714px;height:446px;background:#f7faf7"></div>
<div class="a" style="left:294px;top:177px;width:1px;height:428px;background:#1010c8"></div>
<div class="a" style="left:295px;top:398px;width:695px;height:17px;background:#dedede"></div>
<div class="a" style="left:296px;top:177px;width:694px;height:429px;overflow:hidden">
<div class="code" style="left:159px;top:1px">invoke.invoke(<span class="kp">null</span>,<span class="k">new</span> Object[]{<span class="kp">this</span>,pv});</div>
<div class="code" style="left:159px;top:18px">}<span class="k">catch</span>(Exception ioe){</div>
<div class="code" style="left:191px;top:35px">System.out.println(<span class="s">"Exception reading ini file for plugin "</span>+pluginDirecs[i].getName());</div>
<div class="code" style="left:191px;top:52px">System.out.println(<span class="s">"Classpath:"</span>+System.getProperty(<span class="s">"class.path"</span>));</div>
<div class="code" style="left:191px;top:69px">ioe.printStackTrace();</div>
<div class="code" style="left:159px;top:86px">}</div>
<div class="code" style="left:127px;top:103px">}</div>
<div class="code" style="left:95px;top:120px">}</div>
<div class="code" style="left:63px;top:137px">}</div>
<div class="code" style="left:31px;top:154px">}</div>
<div class="code" style="left:31px;top:171px"><span class="k">private</span> String replacePID(String s)</div>
<div class="code" style="left:45px;top:188px">{</div>
<div class="code" style="left:75px;top:205px">String start=<span class="s">""</span>;</div>
<div class="code" style="left:75px;top:222px"> String realDeal=s;</div>
<div class="code" style="left:75px;top:239px"><span class="k">while</span>(realDeal.indexOf(<span class="s">"&lt;PLUGINS_DIR&gt;"</span>)&gt;=0)</div>
<div class="code" style="left:75px;top:256px">{</div>
<div class="code" style="left:75px;top:273px">start=realDeal.substring(0,realDeal.indexOf(<span class="s">"&lt;PLUGINS_DIR&gt;"</span>));</div>
<div class="code" style="left:75px;top:290px">realDeal=getPluginsDirectory()+realDeal.substring(realDeal.indexOf(<span class="s">"&lt;PLUGINS_DIR&gt;"</span>)+<span class="s">"&lt;PLUGINS_DIR&gt;"</span>.length());</div>
<div class="code" style="left:75px;top:307px">realDeal=start+realDeal;</div>
<div class="code" style="left:75px;top:324px">}</div>
<div class="code" style="left:75px;top:341px"></div>
<div class="code" style="left:75px;top:358px">realDeal=JasmineUtils.changePathSeps(realDeal);</div>
<div class="code" style="left:75px;top:375px">String p=System.getProperty(<span class="s">"os.name"</span>);</div>
<div class="code" style="left:95px;top:392px"><span class="k">if</span>(p.indexOf(<span class="s">"Windows"</span>)&gt;=0)</div>
<div class="code" style="left:95px;top:409px">realDeal=JasmineUtils.changeBackFileSeperators(realDeal);</div>
</div>
<svg class="a" style="left:990px;top:177px" width="16" height="428" viewBox="0 0 16 428"><rect width="16" height="428" fill="#dfdfe1"/><rect x="0" y="0" width="1" height="428" fill="#8a8a8e"/><rect x="15" y="0" width="1" height="428" fill="#8a8a8e"/><rect x="1" y="0" width="1" height="428" fill="#fbfbfb"/><rect x="2" y="1" width="13" height="15" fill="url(#btv)"/><rect x="1" y="0" width="14" height="1" fill="#fbfbfb"/><rect x="1" y="15" width="14" height="1" fill="#8a8a8e"/><path d="M4 9 L12 9 L8 5 Z" fill="#000"/><rect x="2" y="412" width="13" height="15" fill="url(#btv)"/><rect x="1" y="412" width="14" height="1" fill="#8a8a8e"/><rect x="2" y="413" width="13" height="1" fill="#fbfbfb"/><rect x="1" y="427" width="15" height="1" fill="#8a8a8e"/><path d="M4 418 L12 418 L8 422 Z" fill="#000"/></svg>
<svg class="a" style="left:990px;top:501px" width="16" height="17" viewBox="0 0 16 17"><rect x="0" y="0" width="16" height="17" fill="url(#thv)"/><rect x="3" y="4" width="11" height="11" fill="url(#tdot)"/><rect x="0" y="16" width="16" height="1" fill="#111"/><rect x="1" y="1" width="14" height="1" fill="#dedcf0"/><rect x="0" y="0" width="1" height="17" fill="#111"/><rect x="0" y="0" width="16" height="1" fill="#111"/><rect x="15" y="0" width="1" height="17" fill="#8a8a8e"/></svg>
<svg class="a" style="left:294px;top:605px" width="696" height="16" viewBox="0 0 696 16"><rect width="696" height="16" fill="#dfdfe1"/><rect x="0" y="0" width="696" height="1" fill="#8a8a8e"/><rect x="0" y="15" width="696" height="1" fill="#8a8a8e"/><rect x="0" y="1" width="696" height="1" fill="#fbfbfb"/><rect x="1" y="2" width="15" height="13" fill="url(#bth)"/><rect x="0" y="1" width="1" height="14" fill="#fbfbfb"/><rect x="15" y="1" width="1" height="14" fill="#8a8a8e"/><path d="M9 4 L9 12 L5 8 Z" fill="#000"/><rect x="681" y="2" width="14" height="13" fill="url(#bth)"/><rect x="680" y="1" width="1" height="14" fill="#8a8a8e"/><rect x="681" y="2" width="1" height="13" fill="#fbfbfb"/><rect x="695" y="1" width="1" height="15" fill="#8a8a8e"/><path d="M686 4 L686 12 L690 8 Z" fill="#000"/></svg>
<svg class="a" style="left:309px;top:605px" width="132" height="16" viewBox="0 0 132 16"><rect x="0" y="0" width="132" height="16" fill="url(#thh)"/><rect x="4" y="3" width="126" height="11" fill="url(#tdoth)"/><rect x="131" y="0" width="1" height="16" fill="#111"/><rect x="1" y="1" width="1" height="14" fill="#dedcf0"/><rect x="0" y="0" width="1" height="16" fill="#111"/><rect x="0" y="0" width="132" height="1" fill="#111"/><rect x="0" y="15" width="132" height="1" fill="#8a8a8e"/></svg>
<div class="a" style="left:990px;top:605px;width:16px;height:16px;background:#dfdfe1;border-right:1px solid #8a8a8e;border-bottom:1px solid #8a8a8e"></div>
<div class="a" style="left:1006px;top:175px;width:1px;height:447px;background:#8a8a8e"></div>
<div class="a" style="left:291px;top:621px;width:719px;height:3px;background:linear-gradient(#9a9e9a,#7a7e7a)"></div>
<div class="a" style="left:1009px;top:174px;width:1px;height:450px;background:#8a8a8e"></div>
<div class="a" style="left:1010px;top:174px;width:2px;height:452px;background:#fbfbfb"></div>
<div class="a" style="left:291px;top:624px;width:721px;height:1px;background:#e0e0e0"></div>
<div class="a" style="left:289px;top:625px;width:727px;height:2px;background:#8a8a8e"></div>
<div class="a" style="left:3px;top:627px;width:1013px;height:1px;background:#fbfbfb"></div>
<div class="a" style="left:3px;top:627px;width:1013px;height:12px;background:#e2e2e4;border-top:1px solid #fbfbfb"></div>
<svg class="a" style="left:33px;top:632px" width="979" height="6" viewBox="0 0 979 6"><rect width="979" height="6" fill="url(#bump)"/></svg>
<svg class="a" style="left:9px;top:636px" width="24" height="2" viewBox="0 0 24 2"><rect width="24" height="2" fill="url(#bump)"/></svg>
<svg class="a" style="left:8px;top:628px" width="24" height="8" viewBox="0 0 24 8"><path d="M1 6 L9 6 L5 2 Z M13 2 L21 2 L17 6 Z" fill="#111"/></svg>
<div class="a" style="left:3px;top:639px;width:1013px;height:210px;background:#dfdee1"></div>
<div class="a" style="left:5px;top:639px;width:1008px;height:1px;background:#828282"></div>
<div class="a" style="left:5px;top:639px;width:1px;height:175px;background:#828282"></div>
<div class="a" style="left:6px;top:640px;width:1006px;height:2px;background:#fbfbfb"></div>
<div class="a" style="left:6px;top:640px;width:2px;height:173px;background:#fbfbfb"></div>
<div class="a" style="left:8px;top:642px;width:1002px;height:1px;background:#828282"></div>
<div class="a" style="left:8px;top:642px;width:1px;height:143px;background:#828282"></div>
<div class="a" style="left:1012px;top:639px;width:1px;height:175px;background:#828282"></div>
<div class="a" style="left:9px;top:643px;width:999px;height:126px;background:#000"></div>
<div class="a" style="left:9px;top:643px;width:999px;height:126px;overflow:hidden">
<div class="a t" style="left:1px;top:2px;font-size:12px;font-weight:bold;color:#fff;letter-spacing:0.39px;line-height:15px">Rebuilding Project</div>
<div class="a t" style="left:1px;top:19px;font-size:12px;font-weight:bold;color:#fff;letter-spacing:1.29px;line-height:15px">*************************</div>
<div class="a t" style="left:1px;top:36px;font-size:12px;font-weight:bold;color:#fff;letter-spacing:1.03px;line-height:15px">/usr/local/j2sdk1.5.0/bin/javac -g -classpath  /home/jake/devel/Jasmine/plugins/DBPanel/lib/hsqldb.jar:/home/jake/devel/Jasmine/plugins/DBPanel/lib/commons.jar</div>
<div class="a t" style="left:1px;top:53px;font-size:12px;font-weight:bold;color:#fff;letter-spacing:0.4px;line-height:15px">Note: * uses or overrides a deprecated API.</div>
<div class="a t" style="left:1px;top:70px;font-size:12px;font-weight:bold;color:#fff;letter-spacing:0.53px;line-height:15px">Note: Recompile with -Xlint:deprecation for details.</div>
<div class="a t" style="left:1px;top:87px;font-size:12px;font-weight:bold;color:#fff;letter-spacing:0.29px;line-height:15px">Process Finished</div>
<div class="a t" style="left:1px;top:104px;font-size:12px;font-weight:bold;color:#fff;letter-spacing:1.29px;line-height:15px">*************************</div>
</div>
<svg class="a" style="left:9px;top:769px" width="1000" height="16" viewBox="0 0 1000 16"><rect width="1000" height="16" fill="#dfdfe1"/><rect x="0" y="0" width="1000" height="1" fill="#8a8a8e"/><rect x="0" y="15" width="1000" height="1" fill="#8a8a8e"/><rect x="0" y="1" width="1000" height="1" fill="#fbfbfb"/><rect x="1" y="2" width="15" height="13" fill="url(#bth)"/><rect x="0" y="1" width="1" height="14" fill="#fbfbfb"/><rect x="15" y="1" width="1" height="14" fill="#8a8a8e"/><path d="M9 4 L9 12 L5 8 Z" fill="#000"/><rect x="985" y="2" width="14" height="13" fill="url(#bth)"/><rect x="984" y="1" width="1" height="14" fill="#8a8a8e"/><rect x="985" y="2" width="1" height="13" fill="#fbfbfb"/><rect x="999" y="1" width="1" height="15" fill="#8a8a8e"/><path d="M990 4 L990 12 L994 8 Z" fill="#000"/></svg>
<svg class="a" style="left:24px;top:769px" width="188" height="16" viewBox="0 0 188 16"><rect x="0" y="0" width="188" height="16" fill="url(#thh)"/><rect x="4" y="3" width="182" height="11" fill="url(#tdoth)"/><rect x="187" y="0" width="1" height="16" fill="#111"/><rect x="1" y="1" width="1" height="14" fill="#dedcf0"/><rect x="0" y="0" width="1" height="16" fill="#111"/><rect x="0" y="0" width="188" height="1" fill="#111"/><rect x="0" y="15" width="188" height="1" fill="#8a8a8e"/></svg>
<div class="a" style="left:9px;top:785px;width:1000px;height:1px;background:#828282"></div>
<div class="a" style="left:1009px;top:643px;width:1px;height:143px;background:#fbfbfb"></div>
<div class="a" style="left:90px;top:788px;width:104px;height:19px;background:linear-gradient(#c4c8c4,#b2b6b2);border-left:1px solid #f4f4f4;border-right:2px solid #828282;border-bottom:1px solid #828282;border-radius:0 0 3px 3px"></div>
<div class="a" style="left:8px;top:786px;width:82px;height:23px;background:#e4e4e6;border-left:1px solid #fafafa;border-bottom:1px solid #828282;border-right:1px solid #9a9a9a"></div>
<div class="a t " style="left:19px;top:793px;font-size:12px;font-weight:bold;color:#000;letter-spacing:0.28px;line-height:15px">Messages</div>
<div class="a t " style="left:102px;top:791px;font-size:12px;font-weight:bold;color:#000;letter-spacing:0.25px;line-height:15px">Grep Matches</div>
<div class="a" style="left:3px;top:813px;width:1013px;height:1px;background:#828282"></div>
<div class="a" style="left:3px;top:814px;width:1013px;height:1px;background:#fbfbfb"></div>
<div class="a" style="left:6px;top:819px;width:882px;height:19px;background:#e2e2e4;border-top:2px solid #828282;border-left:2px solid #828282;border-bottom:1px solid #fafafa;border-right:1px solid #fafafa"></div>
<div class="a t " style="left:9px;top:822px;font-size:12px;font-weight:bold;color:#000;letter-spacing:0.77px;line-height:15px">Current project is Jasmine --- Location:/home/jake/devel/Jasmine</div>
<div class="a" style="left:894px;top:819px;width:120px;height:19px;background:#e2e2e4;border-top:2px solid #828282;border-left:2px solid #828282;border-bottom:1px solid #fafafa;border-right:1px solid #fafafa"></div>
<div class="a t " style="left:900px;top:822px;font-size:12px;font-weight:bold;color:#000;letter-spacing:0.51px;line-height:15px">Ln:2742 Col:25</div>
<div class="a" style="left:3px;top:839px;width:1013px;height:8px;background:#e8e8ea"></div>
<div class="a" style="left:0px;top:847px;width:1021px;height:2px;background:#8a8a8a"></div>
<div class="a" style="left:1016px;top:28px;width:1px;height:821px;background:#8a8a8a"></div>
<div class="a" style="left:1017px;top:28px;width:2px;height:821px;background:#fbfbfb"></div>
<div class="a" style="left:1019px;top:28px;width:2px;height:821px;background:#9a9a9a"></div>
</body></html>
